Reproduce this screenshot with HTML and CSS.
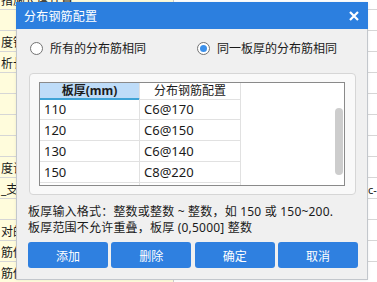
FILE: index.html
```html
<!DOCTYPE html>
<html lang="zh-CN">
<head>
    <meta charset="UTF-8">
    <title>分布钢筋配置</title>
    <link rel="stylesheet" href="styles.css">
</head>
<body>
    <div class="sheet">
        <div class="row"><div class="cell">措施长度计算</div><div class="cell"></div></div>
        <div class="row"><div class="cell"></div><div class="cell"></div></div>
        <div class="row"><div class="cell">度锚固</div><div class="cell"></div></div>
        <div class="row"><div class="cell">析长度</div><div class="cell"></div></div>
        <div class="row"><div class="cell"></div><div class="cell"></div></div>
        <div class="row"><div class="cell"></div><div class="cell"></div></div>
        <div class="row"><div class="cell"></div><div class="cell"></div></div>
        <div class="row"><div class="cell"></div><div class="cell"></div></div>
        <div class="row"><div class="cell">度计算</div><div class="cell"></div></div>
        <div class="row"><div class="cell">_支座</div><div class="cell right">c-</div></div>
        <div class="row"><div class="cell"></div><div class="cell"></div></div>
        <div class="row"><div class="cell">对的</div><div class="cell"></div></div>
        <div class="row"><div class="cell">筋伸入</div><div class="cell"></div></div>
        <div class="row"><div class="cell">筋伸入</div><div class="cell"></div></div>
    </div>

    <div class="dialog">
        <div class="title-bar">
            <span>分布钢筋配置</span>
            <svg class="close" width="10" height="10" viewBox="0 0 10 10">
                <path d="M1 1 L9 9 M9 1 L1 9" stroke="#fff" stroke-width="2.2" fill="none"/>
            </svg>
        </div>

        <div class="options">
            <label class="option"><span class="radio"></span>所有的分布筋相同</label>
            <label class="option"><span class="radio checked"></span>同一板厚的分布筋相同</label>
        </div>

        <div class="group">
            <div class="grid">
                <div class="grid-row head">
                    <div class="gc sel">板厚(mm)</div>
                    <div class="gc">分布钢筋配置</div>
                </div>
                <div class="grid-row">
                    <div class="gc">110</div>
                    <div class="gc">C6@170</div>
                </div>
                <div class="grid-row">
                    <div class="gc">120</div>
                    <div class="gc">C6@150</div>
                </div>
                <div class="grid-row">
                    <div class="gc">130</div>
                    <div class="gc">C6@140</div>
                </div>
                <div class="grid-row">
                    <div class="gc">150</div>
                    <div class="gc">C8@220</div>
                </div>
                <div class="grid-row">
                    <div class="gc"></div>
                    <div class="gc"></div>
                </div>
                <div class="thumb"></div>
            </div>
        </div>

        <div class="hint">
            板厚输入格式：整数或整数 ~ 整数，如 150 或 150~200.<br>
            板厚范围不允许重叠，板厚 (0,5000] 整数
        </div>

        <div class="buttons">
            <button>添加</button>
            <button>删除</button>
            <button>确定</button>
            <button>取消</button>
        </div>
    </div>
</body>
</html>
```

FILE: styles.css
```css
body {
    margin: 0;
    width: 377px;
    height: 282px;
    overflow: hidden;
    position: relative;
    background: #fff;
    font-family: "Noto Sans", "Noto Sans CJK SC", sans-serif;
    font-size: 12px;
    color: #1a1a1a;
}
.sheet {
    margin-top: -11px;
}
.row {
    display: grid;
    grid-template-columns: 174px 1fr;
    height: 21px;
    box-sizing: border-box;
    border-bottom: 1px solid #d6d6d6;
}
.cell {
    line-height: 20px;
    padding: 2px 0 0 1px;
    white-space: nowrap;
    overflow: hidden;
}
.cell:first-child {
    background: #fffcdc;
    border-right: 1px solid #cfcfcf;
}
.cell.right {
    padding-left: 194px;
    font-size: 11px;
}

.dialog {
    position: absolute;
    left: 16px;
    top: 2px;
    width: 352px;
    height: 278px;
    box-sizing: border-box;
    background: #f0f0f0;
    border: 1px solid #c3c7cc;
    border-top: none;
    box-shadow: 0 0 3px rgba(0, 0, 0, 0.08);
}
.title-bar {
    height: 27px;
    margin: 0 -1px;
    background: #2c7fdf;
    color: #fff;
    display: flex;
    align-items: center;
    justify-content: space-between;
    padding: 0 9px 0 8px;
    letter-spacing: 0.2px;
}
.close {
    display: block;
}

.options {
    display: grid;
    grid-template-columns: 167px 1fr;
    height: 24px;
    margin-top: 7px;
    padding-left: 13px;
}
.option {
    display: flex;
    align-items: center;
    gap: 7px;
}
.radio {
    width: 13px;
    height: 13px;
    box-sizing: border-box;
    border: 1px solid #737373;
    border-radius: 50%;
    background: #fff;
    display: flex;
    align-items: center;
    justify-content: center;
}
.radio.checked::after {
    content: "";
    width: 7px;
    height: 7px;
    border-radius: 50%;
    background: #3c90ea;
}

.group {
    margin: 13px 0 0 12px;
    width: 327px;
    height: 122px;
    box-sizing: border-box;
    border: 1px solid #d6d6d6;
    border-radius: 4px;
    background: #f9f9f9;
    padding: 8px 0 0 9px;
}
.grid {
    position: relative;
    width: 306px;
    height: 104px;
    box-sizing: border-box;
    border: 1px solid #8a8a8a;
    background: #fff;
    overflow: hidden;
}
.grid-row {
    display: grid;
    grid-template-columns: 100px 101px;
    height: 21px;
}
.grid-row.head {
    height: 16px;
}
.gc {
    box-sizing: border-box;
    border-right: 1px solid #e1e1e1;
    border-bottom: 1px solid #e1e1e1;
    padding-left: 4px;
    line-height: 20px;
    font-size: 13px;
}
.head .gc {
    text-align: center;
    padding-left: 0;
    line-height: 15px;
    font-size: 12px;
}
.head .gc.sel {
    background: #bedcf8;
    border-bottom: 2px solid #3ea3d6;
    font-weight: bold;
}
.thumb {
    position: absolute;
    left: 295px;
    top: 25px;
    width: 8px;
    height: 67px;
    border-radius: 4px;
    background: #cdcdcd;
}

.hint {
    margin-top: 9px;
    padding-left: 11px;
    line-height: 16px;
    white-space: nowrap;
    letter-spacing: 0.2px;
}

.buttons {
    display: grid;
    grid-template-columns: repeat(4, 1fr);
    gap: 3.3px;
    width: 330px;
    margin: 6px 0 0 11px;
}
button {
    height: 26px;
    border: none;
    border-radius: 3px;
    background: #2f80e0;
    color: #fff;
    font-family: "Noto Sans CJK SC", sans-serif;
    font-size: 12px;
    padding: 0;
}
```
